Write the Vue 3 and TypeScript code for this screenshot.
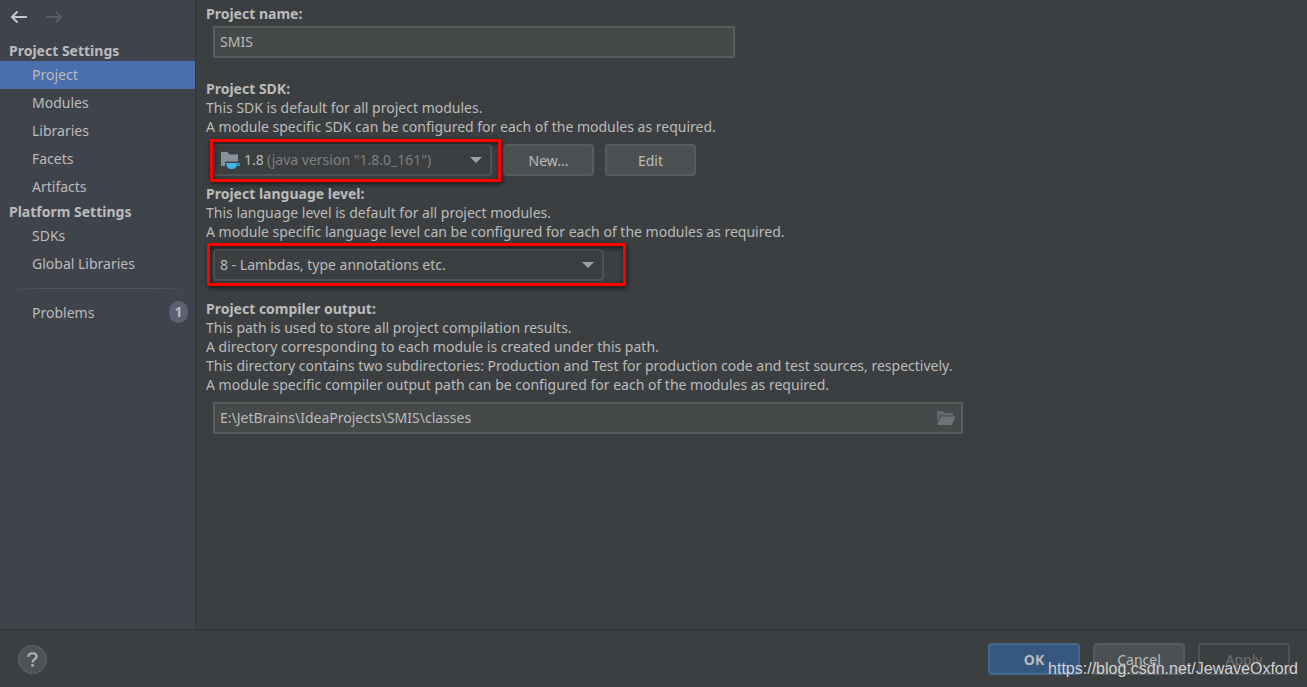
<script setup lang="ts">
import { computed, ref } from 'vue'

interface NavGroup {
  title: string
  items: string[]
}

const groups: NavGroup[] = [
  { title: 'Project Settings', items: ['Project', 'Modules', 'Libraries', 'Facets', 'Artifacts'] },
  { title: 'Platform Settings', items: ['SDKs', 'Global Libraries'] },
]
const current = ref('Project')

const projectName = ref('SMIS')
const outputPath = ref('E:\\JetBrains\\IdeaProjects\\SMIS\\classes')

const sdks = [{ name: '1.8', detail: '(java version "1.8.0_161")' }]
const sdk = ref('1.8')
const sdkDetail = computed(() => sdks.find((s) => s.name === sdk.value)?.detail ?? '')

const levels = ['8 - Lambdas, type annotations etc.']
const level = ref(levels[0])
</script>

<template>
  <div class="dialog">
    <div class="body">
      <nav class="sidebar" aria-label="Settings">
        <div class="history">
          <button type="button" class="arrow" aria-label="Back">
            <svg width="18" height="14" viewBox="0 0 18 14" fill="none" stroke="#c4c6c8" stroke-width="2">
              <path d="M17 7H2M7.5 1.5L2 7l5.500 5.500" />
            </svg>
          </button>
          <button type="button" class="arrow" aria-label="Forward" disabled>
            <svg width="18" height="14" viewBox="0 0 18 14" fill="none" stroke="#5b5d60" stroke-width="2">
              <path d="M1 7h15M10.500 1.500L16 7l-5.500 5.500" />
            </svg>
          </button>
        </div>
        <template v-for="group in groups" :key="group.title">
          <h2 class="group">{{ group.title }}</h2>
          <button
            v-for="item in group.items"
            :key="item"
            type="button"
            class="item"
            :class="{ selected: item === current }"
            @click="current = item"
          >
            {{ item }}
          </button>
        </template>
        <hr class="rule" />
        <button type="button" class="item" :class="{ selected: current === 'Problems' }" @click="current = 'Problems'">
          <span>Problems</span>
          <span class="count">1</span>
        </button>
      </nav>

      <main class="content">
        <section>
          <label class="title" for="name">Project name:</label>
          <input id="name" v-model="projectName" class="field name" type="text" />
        </section>

        <section class="sdk">
          <label class="title" for="sdk">Project SDK:</label>
          <p>This SDK is default for all project modules.</p>
          <p>A module specific SDK can be configured for each of the modules as required.</p>
          <div class="row">
            <div class="combo sdk-combo">
              <select id="sdk" v-model="sdk">
                <option v-for="s in sdks" :key="s.name">{{ s.name }}</option>
              </select>
              <svg class="folder" width="20" height="18" viewBox="0 0 20 18" aria-hidden="true">
                <path d="M1 1h6.500l2 2.500H18V10.500H5V15H1z" fill="#87939a" />
                <path d="M6 12h13.500v3h-3c-.8 2-2.200 3-4 3h-2C8 18 6.500 16 6 12z" fill="#3fb6e3" />
                <path d="M16.500 13h1.800v1h-1.800z" fill="#3c3f41" />
              </svg>
              <span class="detail">{{ sdkDetail }}</span>
              <svg class="caret" width="12" height="6" viewBox="0 0 12 6" aria-hidden="true">
                <path d="M0 0h12L6 6z" fill="#9da0a2" />
              </svg>
            </div>
            <button type="button" class="button">New...</button>
            <button type="button" class="button">Edit</button>
          </div>
        </section>

        <section class="level">
          <label class="title" for="level">Project language level:</label>
          <p>This language level is default for all project modules.</p>
          <p>A module specific language level can be configured for each of the modules as required.</p>
          <div class="row">
            <div class="combo level-combo">
              <select id="level" v-model="level">
                <option v-for="l in levels" :key="l">{{ l }}</option>
              </select>
              <svg class="caret" width="12" height="6" viewBox="0 0 12 6" aria-hidden="true">
                <path d="M0 0h12L6 6z" fill="#9da0a2" />
              </svg>
            </div>
          </div>
        </section>

        <section class="output">
          <label class="title" for="output">Project compiler output:</label>
          <p>This path is used to store all project compilation results.</p>
          <p>A directory corresponding to each module is created under this path.</p>
          <p>This directory contains two subdirectories: Production and Test for production code and test sources, respectively.</p>
          <p>A module specific compiler output path can be configured for each of the modules as required.</p>
          <div class="field path">
            <input id="output" v-model="outputPath" type="text" />
            <button type="button" class="browse" aria-label="Browse">
              <svg width="20" height="14" viewBox="0 0 20 14">
                <path d="M1 0h6l2 2h8v2.500H4L1 11z" fill="#626a6d" />
                <path d="M4.500 5.500H19.500L16 14H1z" fill="#6b7376" />
              </svg>
            </button>
          </div>
        </section>
      </main>
    </div>

    <footer class="footer">
      <button type="button" class="help" aria-label="Help">
        <svg width="11" height="15" viewBox="0 0 12 16" fill="none" stroke="#b4b6b8" stroke-width="2.400">
          <path d="M1.500 5C1.500 2.500 3.300 1.200 6 1.200s4.500 1.300 4.500 3.600C10.500 7.500 6 7.800 6 11.300" />
          <path d="M6 13.200v2.600" stroke-width="2.800" />
        </svg>
      </button>
      <div class="actions">
        <button type="button" class="button primary">OK</button>
        <button type="button" class="button">Cancel</button>
        <button type="button" class="button" disabled>Apply</button>
      </div>
      <span class="watermark">https://blog.csdn.net/JewaveOxford</span>
    </footer>
  </div>
</template>

<style>
body {
  margin: 0;
  background: #3c3f41;
}
</style>

<style scoped>
.dialog {
  display: flex;
  flex-direction: column;
  min-height: 100vh;
  background: #3c3f41;
  color: #bbbbbb;
  font-family: "Noto Sans", "Open Sans", sans-serif;
  font-size: 14px;
  line-height: 19px;
}
.dialog *,
.dialog *::after {
  box-sizing: border-box;
}
button,
input,
select {
  font: inherit;
  color: inherit;
  margin: 0;
}
.body {
  display: flex;
  flex: 1;
}
.sidebar {
  display: flex;
  flex-direction: column;
  flex: 0 0 196px;
  border-right: 1px solid #323537;
  background: #3f434c;
}
.history {
  display: flex;
  gap: 17px;
  height: 40px;
  padding: 10px 10px 0;
}
.arrow {
  display: flex;
  height: 14px;
  padding: 0;
  border: 0;
  background: none;
}
.group {
  margin: 0;
  padding-left: 9px;
  font-size: 14px;
  font-weight: 700;
  line-height: 21px;
}
.item {
  display: flex;
  align-items: center;
  justify-content: space-between;
  height: 28px;
  padding: 0 7px 2px 32px;
  border: 0;
  background: none;
  text-align: left;
}
.item.selected {
  background: #4b6eaf;
}
.rule {
  width: 180px;
  height: 1px;
  margin: 10px 0 10px 8px;
  border: 0;
  background: linear-gradient(90deg, transparent, #53565a 20%, #53565a 80%, transparent);
}
.count {
  width: 19px;
  height: 22px;
  border-radius: 10px;
  background: #5c6072;
  font-weight: 700;
  line-height: 22px;
  text-align: center;
}
.content {
  flex: 1;
  min-width: 0;
  padding: 4px 10px 16px;
}
.title {
  display: block;
  font-weight: 700;
}
p {
  margin: 0;
}
.field {
  display: block;
  height: 32px;
  border: 2px solid #5a5d5e;
  background: #45494a;
}
.name {
  width: 522px;
  max-width: 100%;
  margin: 3px 0 0 7px;
  padding: 0 5px 2px;
}
.sdk {
  margin-top: 21px;
}
.level {
  margin-top: 8px;
}
.output {
  margin-top: 18px;
}
.row {
  display: flex;
  gap: 11px;
  margin: 8px 0 0 7px;
}
.combo {
  display: grid;
  align-items: center;
  position: relative;
  height: 32px;
}
.combo > * {
  grid-area: 1 / 1;
}
.combo select {
  width: 100%;
  height: 32px;
  padding: 0 5px 2px;
  border: 2px solid #515456;
  border-radius: 4px;
  background: #3c3f41;
  appearance: none;
}
.combo::after {
  content: "";
  position: absolute;
  border: 3px solid #ff0000;
  box-shadow: 1px 2px 5px rgba(0, 0, 0, 0.6), inset 1px 2px 5px rgba(0, 0, 0, 0.6);
  pointer-events: none;
}
.sdk-combo {
  width: 279px;
}
.combo.sdk-combo select {
  padding-left: 29px;
}
.sdk-combo::after {
  inset: -5px -9px -6px -3px;
}
.level-combo {
  width: 391px;
}
.level-combo::after {
  inset: -6px -22px -5px -6px;
}
.folder {
  margin-left: 7px;
  pointer-events: none;
}
.detail {
  margin-left: 54px;
  padding-bottom: 2px;
  color: #808080;
  pointer-events: none;
}
.caret {
  justify-self: end;
  margin-right: 10px;
  pointer-events: none;
}
.path {
  display: flex;
  align-items: center;
  width: 750px;
  max-width: 100%;
  margin: 8px 0 0 7px;
  padding: 0 5px;
}
.path input {
  flex: 1;
  min-width: 0;
  padding: 0 0 2px;
  border: 0;
  background: none;
}
.browse {
  display: flex;
  padding: 0;
  border: 0;
  background: none;
}
.button {
  width: 91px;
  height: 32px;
  padding: 0;
  border: 2px solid #585b5d;
  border-radius: 4px;
  background: #4c5052;
  text-align: center;
}
.button.primary {
  border-color: #43698e;
  background: #365880;
  font-weight: 700;
}
.button:disabled {
  background: none;
  border-color: #505355;
  color: #6f7173;
}
.footer {
  display: flex;
  align-items: center;
  justify-content: space-between;
  position: relative;
  height: 58px;
  padding: 1px 17px 0 18px;
  border-top: 1px solid #2f3234;
}
.help {
  display: flex;
  align-items: center;
  justify-content: center;
  width: 29px;
  height: 29px;
  padding: 0;
  border: 1px solid #64686a;
  border-radius: 50%;
  background: #4e5254;
}
.actions {
  display: flex;
  gap: 13px;
}
.actions .button {
  width: 92px;
}
.watermark {
  position: absolute;
  right: 9px;
  bottom: 9px;
  color: #d2d3d4;
  font-family: "Liberation Sans", Arial, sans-serif;
  font-size: 16px;
}
</style>
